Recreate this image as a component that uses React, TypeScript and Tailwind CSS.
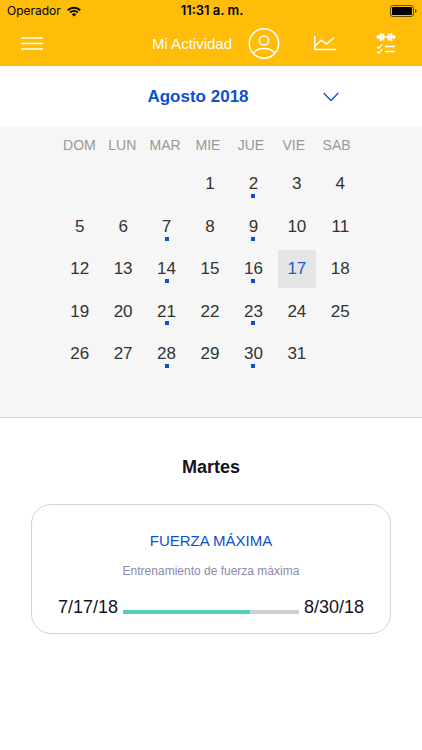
import React, { useState } from "react";

const WEEKDAYS = ["DOM", "LUN", "MAR", "MIE", "JUE", "VIE", "SAB"];
const FIRST_WEEKDAY = 3;
const DAYS = Array.from({ length: 31 }, (_, i) => i + 1);
const TRAINING_DAYS = [2, 7, 9, 14, 16, 21, 23, 28, 30];

const StatusBar: React.FC = () => (
  <div className="grid grid-cols-3 items-center h-[22px] pl-[7px] pr-[5px] text-black font-['Inter',sans-serif]">
    <div className="flex items-center gap-[6px]">
      <span className="text-xs">Operador</span>
      <svg width="14" height="11" viewBox="0 0 14 11" fill="none" stroke="currentColor">
        <path d="M0.8 4.2a8.8 8.8 0 0 1 12.4 0" strokeWidth="2" />
        <path d="M3.1 6.5a5.5 5.5 0 0 1 7.8 0" strokeWidth="1.8" />
        <path d="M7 10.6L4.8 8.4a3.1 3.1 0 0 1 4.4 0z" fill="currentColor" stroke="none" />
      </svg>
    </div>
    <span className="text-center text-[13px] font-semibold">11:31 a. m.</span>
    <svg className="justify-self-end" width="27" height="12" viewBox="0 0 27 12">
      <rect x="0.5" y="0.5" width="23" height="11" rx="2.5" fill="none" stroke="#000" strokeOpacity="0.6" />
      <rect x="2" y="2" width="20" height="8" rx="1" fill="#000" />
      <path d="M25 4v4c1-.4 1.5-1.1 1.5-2S26 4.4 25 4z" fill="#000" fillOpacity="0.6" />
    </svg>
  </div>
);

const NavBar: React.FC = () => (
  <nav className="flex items-center h-11 pl-[21px] pr-[26px] text-white">
    <button aria-label="Menú">
      <svg width="22" height="14" viewBox="0 0 22 14" stroke="currentColor" strokeWidth="1.4">
        <path d="M0 1h22M0 6.5h22M0 12h22" />
      </svg>
    </button>
    <div className="flex items-center ml-auto">
      <a href="#actividad" className="flex items-center gap-4 text-[15px]">
        Mi Actividad
        <svg width="32" height="32" viewBox="0 0 32 32" fill="none" stroke="currentColor" strokeWidth="1.5">
          <circle cx="16" cy="15.5" r="14.7" />
          <circle cx="16" cy="12.5" r="4.6" />
          <path d="M5.2 25.4c2-3.2 5.8-4.8 10.8-4.8s8.8 1.6 10.8 4.8" />
        </svg>
      </a>
      <a href="#progreso" aria-label="Progreso" className="ml-[34px]">
        <svg width="22" height="16" viewBox="0 0 22 16" fill="none" stroke="currentColor" strokeWidth="1.5">
          <path d="M0.8 0v13.500h21.200" />
          <path d="M1 10l6.200-5.800 5.500 3.800 7.300-6.500" />
        </svg>
      </a>
      <a href="#rutinas" aria-label="Rutinas" className="ml-10">
        <svg width="20" height="22" viewBox="0 0 20 22" fill="none" stroke="currentColor">
          <path d="M2.300 2v4M17.700 2v4" strokeWidth="2" />
          <path d="M4.800 0v8M15.200 0v8M7.300 0.500v7M12.700 0.500v7" strokeWidth="2" />
          <path d="M0.500 4h19" strokeWidth="1.400" />
          <path d="M1 13.500l1.800 1.800 3.500-4.300M1 18.500l1.800 1.800 3.500-4.300" strokeWidth="1.300" />
          <path d="M9 13.500h10M9 18.500h10" strokeWidth="1.500" />
        </svg>
      </a>
    </div>
  </nav>
);

const App: React.FC = () => {
  const [selected, setSelected] = useState(17);
  const progress = 72;

  return (
    <div className="min-h-screen bg-white font-['Liberation_Sans',Arial,sans-serif]">
      <header className="bg-[#ffbc09]">
        <StatusBar />
        <NavBar />
      </header>

      <main>
        {/* Month selector */}
        <div className="grid grid-cols-[1fr_auto_1fr] items-center h-[61px] px-6 text-[#0c50d0]">
          <h1 className="col-start-2 -ml-[26px] text-[17px] font-bold">Agosto 2018</h1>
          <button aria-label="Cambiar mes" className="justify-self-start ml-[74px]">
            <svg width="16" height="10" viewBox="0 0 16 10" fill="none" stroke="currentColor" strokeWidth="1.3">
              <path d="M0.7 1l7.300 7.500L15.300 1" />
            </svg>
          </button>
        </div>

        {/* Calendar */}
        <section className="h-[291px] px-[58px] pt-2 bg-[#f6f6f6] border-b border-[#d4d4d4]">
          <div className="grid grid-cols-7 mr-[6px] text-sm leading-5 text-[#999]">
            {WEEKDAYS.map((name) => (
              <span key={name} className="text-center">{name}</span>
            ))}
          </div>
          <div className="grid grid-cols-7 grid-rows-5 h-[212px] mt-2 mr-[2px] text-[17px] text-[#333]">
            {Array.from({ length: FIRST_WEEKDAY }, (_, i) => (
              <span key={`empty-${i}`} />
            ))}
            {DAYS.map((day) => (
              <button
                key={day}
                onClick={() => setSelected(day)}
                className={`relative place-self-center w-[38px] h-[38px] ${
                  day === selected ? "bg-[#e5e5e5] text-[#1a5bc8]" : ""
                }`}
              >
                {day}
                {TRAINING_DAYS.includes(day) && (
                  <span className="absolute left-1/2 bottom-[5px] -ml-[2px] size-1 bg-[#0c50d0]" />
                )}
              </button>
            ))}
          </div>
        </section>

        {/* Activity of the day */}
        <section className="px-[31px] pt-[37px]">
          <h2 className="text-center text-lg leading-6 font-bold text-[#15131f]">Martes</h2>
          <article className="mt-[25px] px-[26px] pt-[26px] pb-[14px] rounded-[20px] border border-[#d4d4d4]">
            <h3 className="text-center text-[15px] leading-5 text-[#0c50d0]">FUERZA MÁXIMA</h3>
            <p className="mt-3 text-center text-xs leading-4 text-[#8e88ad]">Entrenamiento de fuerza máxima</p>
            <div className="flex items-center gap-[5px] mt-4 text-lg leading-6 text-[#15131f]">
              <span>7/17/18</span>
              <div className="flex-1 h-1 mt-[10px] bg-[#d0d0d0]">
                <div className="h-full bg-[#55cdb9]" style={{ width: `${progress}%` }} />
              </div>
              <span>8/30/18</span>
            </div>
          </article>
        </section>
      </main>
    </div>
  );
};

export default App;
